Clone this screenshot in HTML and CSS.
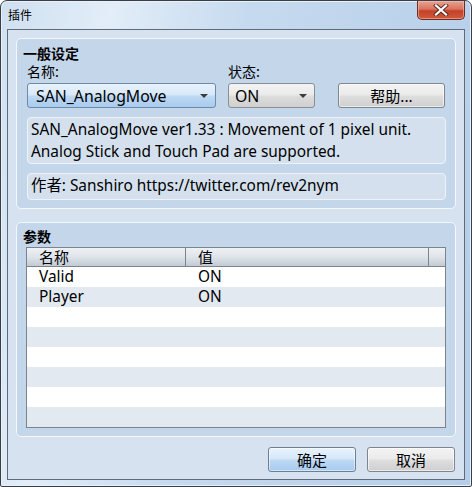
FILE: index.html
```html
<!DOCTYPE html>
<html>
<head>
<meta charset="utf-8">
<link rel="stylesheet" href="styles.css">
</head>
<body>
<div class="window">
  <div class="titlebar">
    <span class="title">插件</span>
    <div class="close">
      <svg width="18" height="12" viewBox="0 0 18 12"><path d="M4 1.5 L14 10.5 M14 1.5 L4 10.5" stroke="#5a2a22" stroke-width="4" stroke-linecap="square"/><path d="M4 1.5 L14 10.5 M14 1.5 L4 10.5" stroke="#fff" stroke-width="2.2" stroke-linecap="square"/></svg>
    </div>
  </div>
  <div class="client">
    <div class="group g1">
      <div class="gtitle">一般设定</div>
      <div class="labels">
        <span class="lab lab1">名称:</span>
        <span class="lab">状态:</span>
      </div>
      <div class="controls">
        <div class="combo combo-blue"><span>SAN_AnalogMove</span><i class="arrow"></i></div>
        <div class="combo combo-grey"><span>ON</span><i class="arrow"></i></div>
        <div class="btn btn-grey help">帮助...</div>
      </div>
      <div class="box desc">SAN_AnalogMove ver1.33 : Movement of 1 pixel unit.<br>Analog Stick and Touch Pad are supported.</div>
      <div class="box author">作者: Sanshiro https://twitter.com/rev2nym</div>
    </div>
    <div class="group g2">
      <div class="gtitle">参数</div>
      <div class="table">
        <div class="thead">
          <div class="th c1">名称</div>
          <div class="th c2">值</div>
          <div class="th c3"></div>
        </div>
        <div class="row"><div class="td c1">Valid</div><div class="td c2">ON</div></div>
        <div class="row alt"><div class="td c1">Player</div><div class="td c2">ON</div></div>
        <div class="row"></div>
        <div class="row alt"></div>
        <div class="row"></div>
        <div class="row alt"></div>
        <div class="row"></div>
        <div class="row alt"></div>
      </div>
    </div>
    <div class="footer">
      <div class="btn btn-blue">确定</div>
      <div class="btn btn-grey">取消</div>
    </div>
  </div>
</div>
</body>
</html>
```
FILE: styles.css
```css
html, body {
  margin: 0;
  padding: 0;
  background: #ffffff;
}
body {
  font-family: "Noto Sans", "Noto Sans CJK SC", sans-serif;
  color: #000;
}
.window {
  width: 470px;
  height: 485px;
  border: 1px solid #3a3f46;
  border-radius: 7px 7px 2px 2px;
  background: linear-gradient(100deg, #cfe0f1 0%, #e2edf8 20%, #c6daef 45%, #b4cde8 100%);
  display: flex;
  flex-direction: column;
  overflow: hidden;
  box-shadow: inset 0 0 0 1px #e8f1fa;
}
.titlebar {
  height: 28px;
  display: flex;
  justify-content: space-between;
  align-items: flex-start;
  flex-shrink: 0;
}
.title {
  font-family: "Noto Sans CJK SC", sans-serif;
  font-size: 12px;
  line-height: 14px;
  margin: 7px 0 0 7px;
  color: #000;
}
.close {
  width: 46px;
  height: 18px;
  margin-right: 6px;
  border: 1px solid #6b2d24;
  border-top: none;
  border-radius: 0 0 5px 5px;
  background: linear-gradient(#e7a394 0%, #d9735e 45%, #c2412a 55%, #d25a3a 100%);
  display: flex;
  align-items: center;
  justify-content: center;
  box-shadow: inset 0 0 0 1px rgba(255,200,190,0.5);
}
.client {
  margin: 0 6px 6px 6px;
  flex: 1;
  border: 1px solid #5f6b78;
  background: #d6e2ef;
  display: flex;
  flex-direction: column;
  padding: 8px 8px 0 8px;
}
.group {
  border: 1px solid #f4f8fc;
  border-radius: 5px;
  background: #c4d6ea;
  display: flex;
  flex-direction: column;
}
.g1 {
  height: 171px;
  box-sizing: border-box;
  padding: 0 9px 0 10px;
}
.gtitle {
  font-family: "Noto Sans CJK SC", sans-serif;
  font-weight: bold;
  font-size: 14px;
  line-height: 16px;
  margin: 6px 0 0 -4px;
  height: 16px;
}
.labels {
  display: flex;
  height: 16px;
  margin-top: 2px;
  font-family: "Noto Sans CJK SC", sans-serif;
  font-size: 14px;
  line-height: 16px;
}
.lab1 { width: 201px; }
.controls {
  display: flex;
  margin-top: 4px;
  height: 25px;
}
.combo {
  box-sizing: border-box;
  height: 25px;
  border-radius: 3px;
  display: flex;
  align-items: center;
  justify-content: space-between;
  padding: 0 7px 0 8px;
  font-size: 15.8px;
}
.combo span { line-height: 18px; }
.combo-blue {
  width: 189px;
  border: 1px solid #6f8aa6;
  background: linear-gradient(#e8f2fc 0%, #d8e9fa 45%, #bcd8f3 55%, #a9cbef 100%);
}
.combo-grey {
  width: 87px;
  margin-left: 12px;
  border: 1px solid #8a8f96;
  background: linear-gradient(#f3f3f3 0%, #ebebeb 45%, #dcdcdc 55%, #cfcfcf 100%);
  padding-left: 6px;
}
.arrow {
  width: 0;
  height: 0;
  border-left: 4px solid transparent;
  border-right: 4px solid transparent;
  border-top: 4px solid #3c3c3c;
}
.btn {
  box-sizing: border-box;
  height: 25px;
  border-radius: 3px;
  display: flex;
  align-items: center;
  justify-content: center;
  font-family: "Noto Sans CJK SC", sans-serif;
  font-size: 15px;
}
.btn-grey {
  border: 1px solid #7e858d;
  background: linear-gradient(#f3f3f3 0%, #ebebeb 45%, #dddddd 55%, #cfcfcf 100%);
  box-shadow: inset 0 0 0 1px rgba(255,255,255,0.6);
}
.btn-blue {
  border: 1px solid #6d7e91;
  background: linear-gradient(#e8f3fd 0%, #d6e8fa 45%, #bcd8f4 55%, #a7caed 100%);
  box-shadow: inset 0 0 0 1px rgba(255,255,255,0.5);
}
.help {
  width: 107px;
  margin-left: 23px;
}
.box {
  box-sizing: border-box;
  width: 419px;
  border: 1px solid #eef3f9;
  border-radius: 4px;
  background: #d4e0ed;
  font-size: 15.4px;
  line-height: 22px;
  padding: 0 0 0 3px;
}
.desc {
  margin-top: 9px;
  height: 47px;
  padding-top: 1px;
}
.author {
  margin-top: 9px;
  height: 27px;
  padding-top: 1px;
}
.author, .desc { font-family: "Noto Sans", "Noto Sans CJK SC", sans-serif; }
.g2 {
  margin-top: 13px;
  height: 215px;
  box-sizing: border-box;
  padding: 0 0 0 9px;
}
.g2 .gtitle { margin-left: -3px; margin-top: 5px; }
.table {
  margin-top: 3px;
  width: 420px;
  height: 181px;
  box-sizing: border-box;
  border: 1px solid #7b838d;
  background: #fff;
  display: flex;
  flex-direction: column;
}
.thead {
  display: flex;
  height: 19px;
  box-sizing: border-box;
  border-bottom: 1px solid #7b838d;
  background: linear-gradient(#eef1f5 0%, #dfe4ea 50%, #c3cad3 100%);
  flex-shrink: 0;
}
.th {
  box-sizing: border-box;
  font-family: "Noto Sans CJK SC", sans-serif;
  font-size: 15px;
  line-height: 18px;
  padding-left: 12px;
}
.thead .c1 { width: 159px; border-right: 1px solid #7b838d; }
.thead .c2 { width: 243px; border-right: 1px solid #7b838d; }
.thead .c3 { flex: 1; }
.row {
  height: 20px;
  display: flex;
  flex-shrink: 0;
  background: #fff;
}
.row.alt { background: #e3e9f1; }
.td {
  box-sizing: border-box;
  font-size: 15.4px;
  line-height: 20px;
  padding-left: 12px;
}
.row .c1 { width: 159px; }
.row .c2 { padding-left: 12px; }
.footer {
  display: flex;
  justify-content: flex-end;
  gap: 11px;
  margin-top: 10px;
  padding-right: 1px;
}
.footer .btn {
  width: 88px;
  height: 25px;
}
```
